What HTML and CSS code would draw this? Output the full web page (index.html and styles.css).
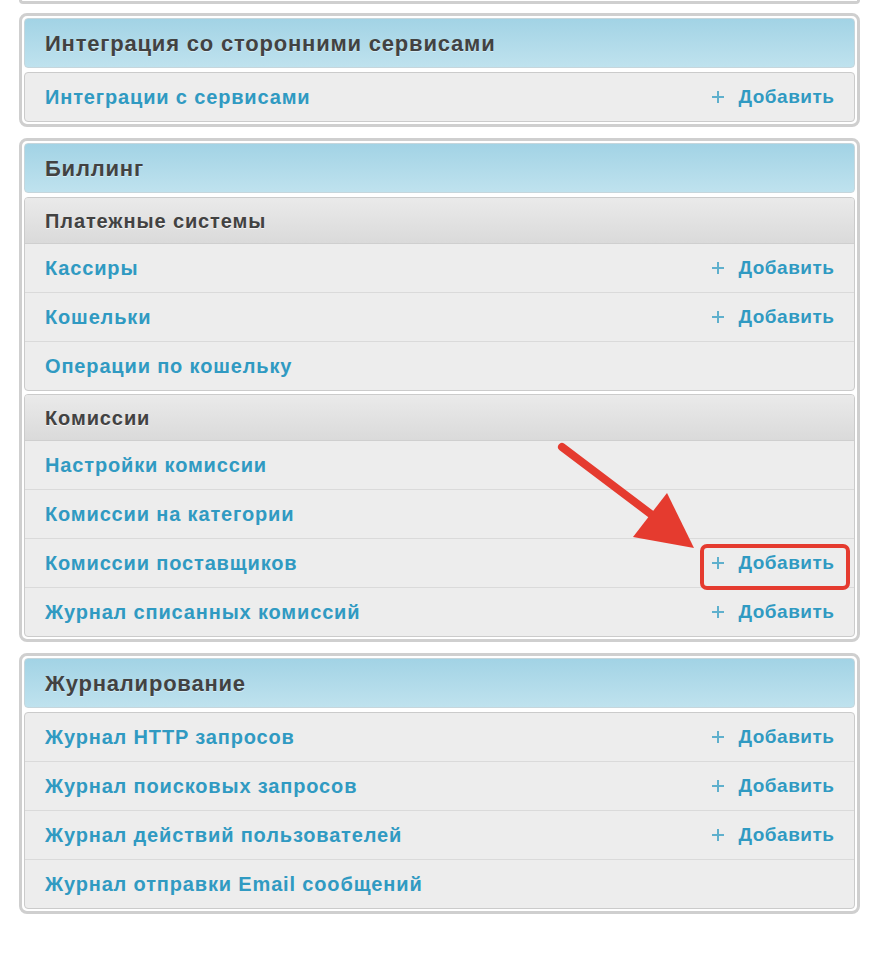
FILE: index.html
```html
<!DOCTYPE html>
<html lang="ru">
<head>
<meta charset="utf-8">
<title>Администрирование</title>
<link rel="stylesheet" href="styles.css">
</head>
<body>
<div class="page">
  <div class="module-tail"></div>

  <section class="module">
    <div class="box head">Интеграция со сторонними сервисами</div>
    <div class="box">
      <div class="row"><a class="link">Интеграции с сервисами</a><a class="add"><span class="plus"></span>Добавить</a></div>
    </div>
  </section>

  <section class="module">
    <div class="box head">Биллинг</div>
    <div class="box">
      <div class="sub">Платежные системы</div>
      <div class="row"><a class="link">Кассиры</a><a class="add"><span class="plus"></span>Добавить</a></div>
      <div class="row"><a class="link">Кошельки</a><a class="add"><span class="plus"></span>Добавить</a></div>
      <div class="row"><a class="link">Операции по кошельку</a></div>
    </div>
    <div class="box group2">
      <div class="sub">Комиссии</div>
      <div class="row"><a class="link">Настройки комиссии</a></div>
      <div class="row"><a class="link">Комиссии на категории</a></div>
      <div class="row"><a class="link">Комиссии поставщиков</a><a class="add"><span class="plus"></span>Добавить</a></div>
      <div class="row"><a class="link">Журнал списанных комиссий</a><a class="add"><span class="plus"></span>Добавить</a></div>
    </div>
  </section>

  <section class="module">
    <div class="box head">Журналирование</div>
    <div class="box">
      <div class="row"><a class="link">Журнал HTTP запросов</a><a class="add"><span class="plus"></span>Добавить</a></div>
      <div class="row"><a class="link">Журнал поисковых запросов</a><a class="add"><span class="plus"></span>Добавить</a></div>
      <div class="row"><a class="link">Журнал действий пользователей</a><a class="add"><span class="plus"></span>Добавить</a></div>
      <div class="row"><a class="link">Журнал отправки Email сообщений</a></div>
    </div>
  </section>
</div>

<svg class="annotation" width="880" height="954" viewBox="0 0 880 954" aria-hidden="true">
  <line x1="562" y1="447" x2="660" y2="521" stroke="#e53b2f" stroke-width="8" stroke-linecap="round"/>
  <polygon points="667,493 633,537 694,548" fill="#e53b2f"/>
  <rect x="702" y="546" width="146" height="42" rx="5" ry="5" fill="none" stroke="#e53b2f" stroke-width="4"/>
</svg>
</body>
</html>
```

FILE: styles.css
```css
* { box-sizing: border-box; }

html, body {
  margin: 0;
  padding: 0;
  background: #ffffff;
}

body {
  font-family: "Liberation Sans", Arial, sans-serif;
  font-weight: bold;
  font-size: 20px;
  position: relative;
  width: 880px;
  height: 954px;
  overflow: hidden;
}

.page {
  padding: 0 20px 0 19px;
  display: flex;
  flex-direction: column;
  gap: 11px;
}

.module-tail {
  height: 4px;
  border: 3px solid #cfcfcf;
  border-top: 0;
  border-radius: 0 0 7px 7px;
  margin-bottom: -2px;
}

.module {
  border: 3px solid #cfcfcf;
  border-radius: 8px;
  padding: 2px;
  display: flex;
  flex-direction: column;
  gap: 4px;
}

.box {
  border: 1px solid #cbcbcb;
  border-radius: 4px;
  background: #ededed;
  overflow: hidden;
}

.group2 { margin-top: -1px; }

.head {
  height: 50px;
  line-height: 49px;
  padding: 0 20px;
  color: #424242;
  font-size: 22px;
  letter-spacing: 0.8px;
  background: linear-gradient(to bottom, #a2d3e5 0%, #bfe2ee 100%);
  border-color: #c6d6dc;
  text-shadow: 0 1px 0 rgba(255, 255, 255, 0.45);
}

.sub {
  height: 46px;
  line-height: 46px;
  padding: 0 20px;
  color: #424242;
  font-size: 20px;
  letter-spacing: 0.9px;
  background: linear-gradient(to bottom, #eaeaea 0%, #dadada 100%);
  text-shadow: 0 1px 0 rgba(255, 255, 255, 0.7);
  border-bottom: 1px solid #cfcfcf;
}

.row {
  height: 49px;
  padding: 0 20px;
  display: flex;
  align-items: center;
  justify-content: space-between;
  border-top: 1px solid #dadada;
}

.row:first-child { border-top: 0; height: 48px; }
.sub + .row { border-top: 0; height: 48px; }

.link, .add {
  color: #309ac2;
  text-decoration: none;
  white-space: nowrap;
}

.link { letter-spacing: 0.85px; }

.add {
  display: flex;
  align-items: center;
  font-size: 19px;
  letter-spacing: 0.5px;
  margin-right: -0.5px;
}

.plus {
  position: relative;
  width: 12px;
  height: 12px;
  margin-right: 14px;
}

.plus::before,
.plus::after {
  content: "";
  position: absolute;
  background: #5fb0cd;
}

.plus::before {
  left: 0;
  right: 0;
  top: 5px;
  height: 1.5px;
}

.plus::after {
  top: 0;
  bottom: 0;
  left: 5px;
  width: 1.5px;
}

.annotation {
  position: absolute;
  left: 0;
  top: 0;
  pointer-events: none;
}
```
